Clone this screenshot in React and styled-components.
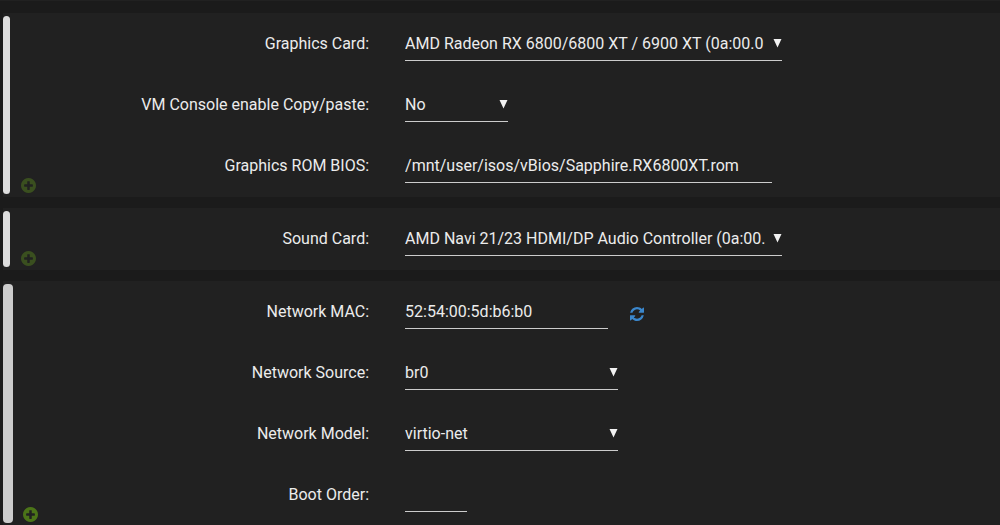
import React from "react";
import styled, { createGlobalStyle } from "styled-components";

const GlobalStyle = createGlobalStyle`
  * {
    box-sizing: border-box;
  }

  body {
    margin: 0;
    background: #1b1b1b;
    color: #ececec;
    font-family: Roboto, "Noto Sans", sans-serif;
    font-size: 16px;
  }
`;

const devices = [
  {
    name: "graphics",
    fields: [
      {
        label: "Graphics Card:",
        type: "select",
        width: 377,
        options: ["AMD Radeon RX 6800/6800 XT / 6900 XT (0a:00.0"],
      },
      {
        label: "VM Console enable Copy/paste:",
        type: "select",
        width: 103,
        options: ["No", "Yes"],
      },
      {
        label: "Graphics ROM BIOS:",
        type: "text",
        width: 367,
        value: "/mnt/user/isos/vBios/Sapphire.RX6800XT.rom",
      },
    ],
  },
  {
    name: "sound",
    fields: [
      {
        label: "Sound Card:",
        type: "select",
        width: 377,
        options: ["AMD Navi 21/23 HDMI/DP Audio Controller (0a:00."],
      },
    ],
  },
  {
    name: "network",
    active: true,
    fields: [
      {
        label: "Network MAC:",
        type: "text",
        width: 203,
        value: "52:54:00:5d:b6:b0",
        refresh: true,
      },
      {
        label: "Network Source:",
        type: "select",
        width: 213,
        options: ["br0", "virbr0"],
      },
      {
        label: "Network Model:",
        type: "select",
        width: 213,
        options: ["virtio-net", "virtio", "e1000"],
      },
      { label: "Boot Order:", type: "text", width: 62, value: "" },
    ],
  },
];

const Page = styled.main`
  display: flex;
  flex-direction: column;
  gap: 11px;
  padding: 12px 0 0 3px;
  border-top: 1px solid #212121;
`;

const Panel = styled.section`
  display: flex;
  background: #212121;
`;

const Side = styled.div`
  display: flex;
  flex: 0 0 41px;
  align-items: flex-end;
  gap: ${({ $active }) => ($active ? "10px" : "11px")};
  padding: 3px 0;
`;

const Bar = styled.div`
  align-self: stretch;
  width: ${({ $active }) => ($active ? "10px" : "7px")};
  border-radius: 4px;
  background: ${({ $active }) => ($active ? "#cccccc" : "#dddddd")};
`;

const IconButton = styled.button`
  display: flex;
  padding: 0;
  border: 0;
  background: none;
  color: ${({ $color }) => $color};
  cursor: pointer;
`;

const AddButton = styled(IconButton)`
  margin-bottom: 1px;
`;

const Fields = styled.div`
  display: flex;
  flex: 1;
  flex-direction: column;
  gap: 28px;
  min-width: 0;
  padding: 15px 0 14px;
`;

const Row = styled.div`
  display: grid;
  grid-template-columns: 34% 1fr;
  column-gap: 36px;
`;

const Label = styled.label`
  line-height: 32px;
  text-align: right;
`;

const Control = styled.div`
  display: flex;
  align-items: center;
  gap: 22px;
`;

const TextInput = styled.input`
  width: ${({ $width }) => $width}px;
  height: 33px;
  padding: 0 0 2px;
  border: 0;
  border-bottom: 1px solid #cccccc;
  outline: 0;
  background: transparent;
  color: inherit;
  font: inherit;
`;

const SelectWrap = styled.div`
  position: relative;
  width: ${({ $width }) => $width}px;
`;

const Select = styled.select`
  display: block;
  width: 100%;
  height: 33px;
  padding: 0 9px 2px 0;
  border: 0;
  border-bottom: 1px solid #cccccc;
  border-radius: 0;
  outline: 0;
  appearance: none;
  background: #212121;
  color: inherit;
  font: inherit;
`;

const Arrow = styled.svg`
  position: absolute;
  top: 10px;
  right: 0;
  pointer-events: none;
`;

const RefreshButton = styled(IconButton)`
  padding-top: 3px;
`;

const PlusCircle = () => (
  <svg width="15" height="15" viewBox="0 0 1536 1536" fill="currentColor">
    <path d="M1216 832v-128q0-26-19-45t-45-19h-256v-256q0-26-19-45t-45-19h-128q-26 0-45 19t-19 45v256h-256q-26 0-45 19t-19 45v128q0 26 19 45t45 19h256v256q0 26 19 45t45 19h128q26 0 45-19t19-45v-256h256q26 0 45-19t19-45zm320-64q0 209-103 385.5t-279.5 279.5-385.5 103-385.5-103-279.5-279.5-103-385.5 103-385.5 279.5-279.5 385.5-103 385.5 103 279.5 279.5 103 385.5z" />
  </svg>
);

const Refresh = () => (
  <svg width="14" height="14" viewBox="0 0 1536 1536" fill="currentColor">
    <path d="M1511 928q0 5-1 7-64 268-268 434.5t-478 166.5q-146 0-282.5-55t-243.5-157l-129 129q-19 19-45 19t-45-19-19-45v-448q0-26 19-45t45-19h448q26 0 45 19t19 45-19 45l-137 137q71 66 161 102t187 36q134 0 250-65t186-179q11-17 53-117 8-23 30-23h192q13 0 22.5 9.5t9.5 22.5zm25-800v448q0 26-19 45t-45 19h-448q-26 0-45-19t-19-45 19-45l138-138q-148-137-349-137-134 0-250 65t-186 179q-11 17-53 117-8 23-30 23h-199q-13 0-22.5-9.5t-9.5-22.5v-7q65-268 270-434.5t480-166.5q146 0 284 55.5t245 156.5l130-129q19-19 45-19t45 19 19 45z" />
  </svg>
);

const Field = ({ id, field }) => {
  return (
    <Row>
      <Label htmlFor={id}>{field.label}</Label>
      <Control>
        {field.type === "select" ? (
          <SelectWrap $width={field.width}>
            <Select id={id}>
              {field.options.map((option) => (
                <option key={option}>{option}</option>
              ))}
            </Select>
            <Arrow width="9" height="10" viewBox="0 0 9 10" fill="#f2f2f2">
              <path d="M0.5 1H8.5L4.5 9.5Z" />
            </Arrow>
          </SelectWrap>
        ) : (
          <TextInput
            id={id}
            type="text"
            $width={field.width}
            defaultValue={field.value}
          />
        )}
        {field.refresh && (
          <RefreshButton
            type="button"
            $color="#3b87cc"
            aria-label="Generate MAC"
          >
            <Refresh />
          </RefreshButton>
        )}
      </Control>
    </Row>
  );
};

const App = () => {
  return (
    <>
      <GlobalStyle />
      <Page>
        {devices.map(({ name, active, fields }) => (
          <Panel key={name}>
            <Side $active={active}>
              <Bar $active={active} />
              <AddButton
                type="button"
                $color={active ? "#4b7418" : "#3a4f1f"}
                aria-label={`Add ${name}`}
              >
                <PlusCircle />
              </AddButton>
            </Side>
            <Fields>
              {fields.map((field, index) => (
                <Field
                  key={field.label}
                  id={`${name}-${index}`}
                  field={field}
                />
              ))}
            </Fields>
          </Panel>
        ))}
      </Page>
    </>
  );
};

export default App;
